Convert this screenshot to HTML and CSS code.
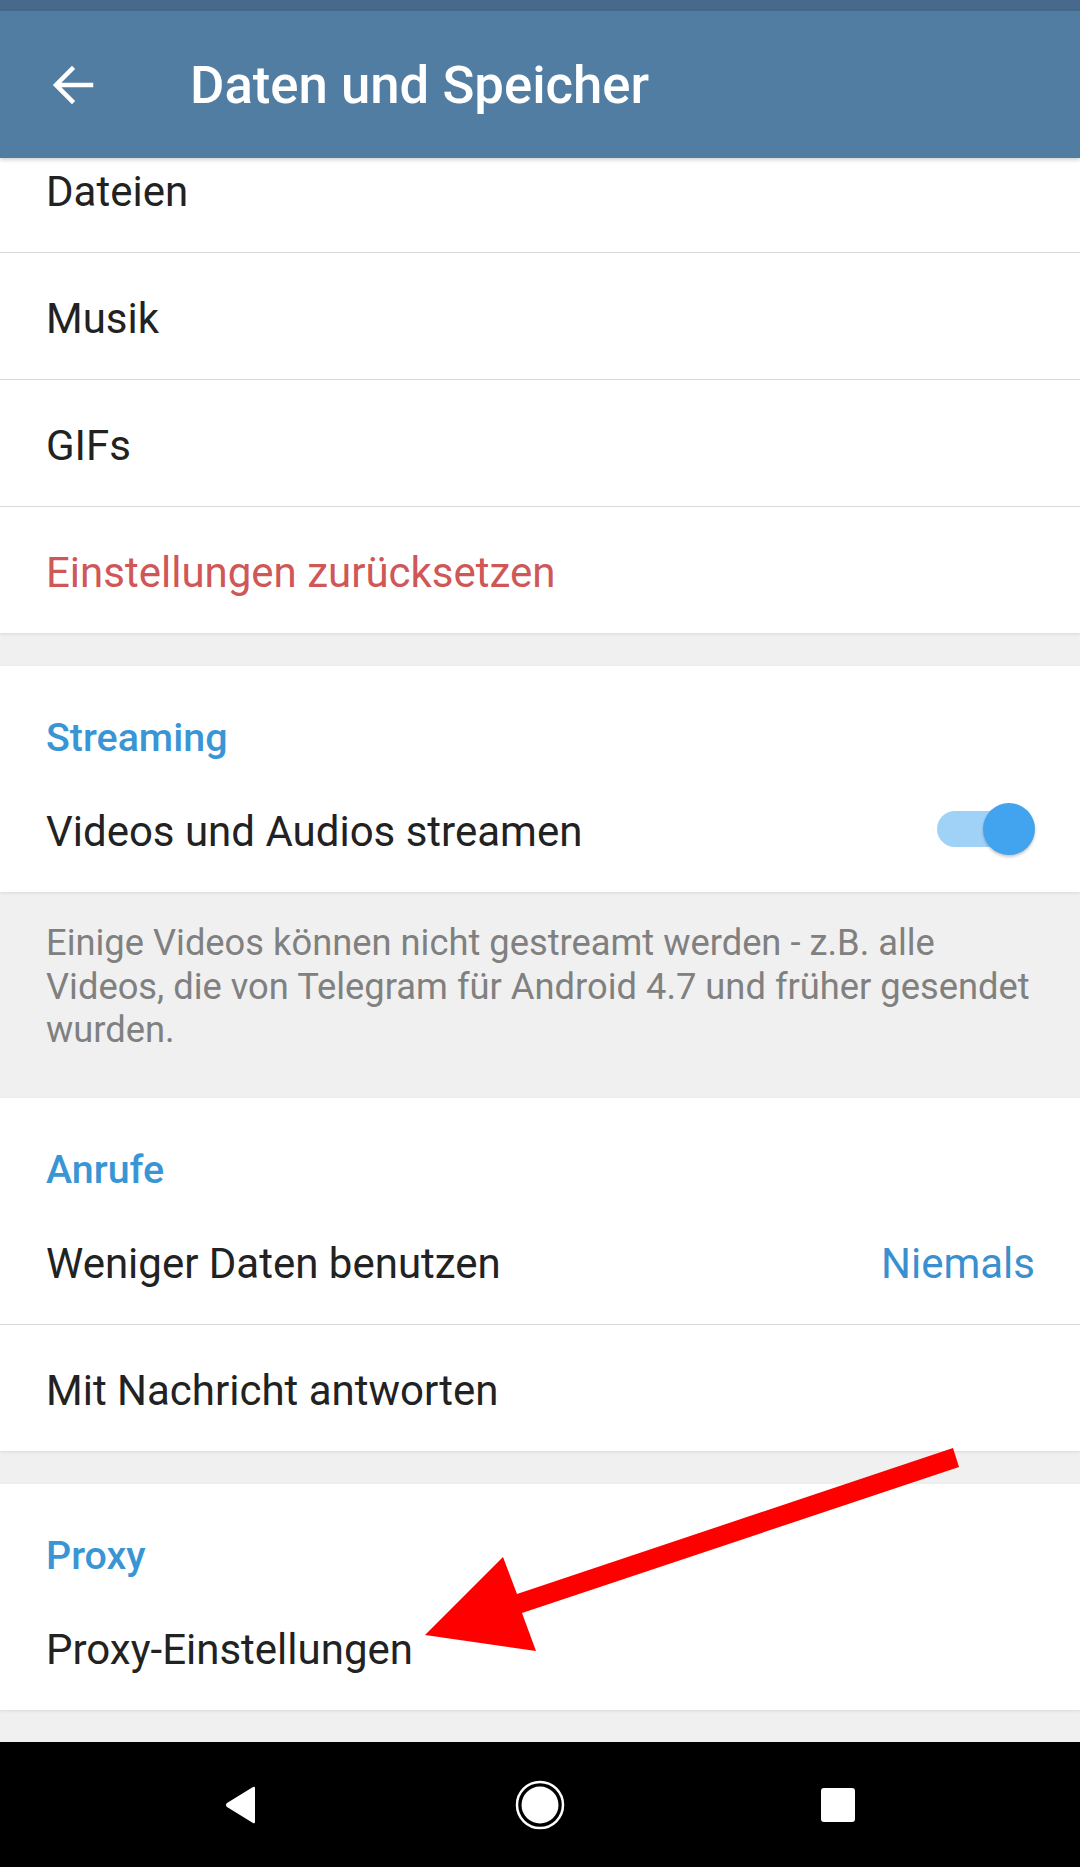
FILE: index.html
```html
<!DOCTYPE html>
<html lang="de">
<head>
    <meta charset="UTF-8">
    <meta name="viewport" content="width=device-width, initial-scale=1.0">
    <title>Daten und Speicher</title>
    <link rel="stylesheet" href="styles.css">
</head>
<body>
    <div class="statusbar"></div>

    <header class="toolbar">
        <button class="back-btn" type="button" aria-label="Zurück">
            <svg width="44" height="44" viewBox="0 0 44 44">
                <path d="M40 22 H6 M21 6 L5 22 L21 38" fill="none" stroke="#fff" stroke-width="4.5" stroke-linecap="square"/>
            </svg>
        </button>
        <h1 class="toolbar-title">Daten und Speicher</h1>
    </header>

    <main class="scroll">
        <section class="card card-first">
            <div class="row row-cut">Dateien</div>
            <div class="row">Musik</div>
            <div class="row">GIFs</div>
            <div class="row row-last red">Einstellungen zurücksetzen</div>
        </section>

        <div class="gap"></div>

        <section class="card">
            <div class="card-header">Streaming</div>
            <div class="row row-last">
                <span>Videos und Audios streamen</span>
                <span class="switch on">
                    <span class="switch-track"></span>
                    <span class="switch-thumb"></span>
                </span>
            </div>
        </section>

        <p class="info">Einige Videos können nicht gestreamt werden - z.B. alle Videos, die von Telegram für Android 4.7 und früher gesendet wurden.</p>

        <section class="card">
            <div class="card-header">Anrufe</div>
            <div class="row">
                <span>Weniger Daten benutzen</span>
                <span class="value">Niemals</span>
            </div>
            <div class="row row-last">Mit Nachricht antworten</div>
        </section>

        <div class="gap"></div>

        <section class="card">
            <div class="card-header">Proxy</div>
            <div class="row row-last">Proxy-Einstellungen</div>
        </section>

        <div class="filler"></div>
    </main>

    <nav class="navbar">
        <svg width="40" height="40" viewBox="0 0 40 40">
            <path d="M34 3 L34 37 Q34 39 32 38 L6 22 Q4 20 6 18 L32 2 Q34 1 34 3 Z" fill="#fff"/>
        </svg>
        <svg width="52" height="52" viewBox="0 0 52 52">
            <circle cx="26" cy="26" r="23" fill="none" stroke="#fff" stroke-width="2.5"/>
            <circle cx="26" cy="26" r="18.5" fill="#fff"/>
        </svg>
        <svg width="40" height="40" viewBox="0 0 40 40">
            <rect x="3" y="3" width="34" height="34" rx="3" fill="#fff"/>
        </svg>
    </nav>

    <!-- Markierung aus dem Screenshot -->
    <svg class="annotation" width="1080" height="1867" viewBox="0 0 1080 1867">
        <polygon points="953,1448 959,1467 522,1613 536,1651 425,1635 503,1557 517,1594" fill="#ff0000"/>
    </svg>
</body>
</html>
```

FILE: styles.css
```css
* {
    box-sizing: border-box;
}
html, body {
    margin: 0;
    padding: 0;
}
body {
    width: 1080px;
    height: 1867px;
    display: flex;
    flex-direction: column;
    font-family: Roboto, "Noto Sans", sans-serif;
    background-color: #f0f0f0;
    color: #222222;
    overflow: hidden;
    position: relative;
}
.statusbar {
    height: 11px;
    background-color: #46698c;
}
.toolbar {
    height: 147px;
    display: flex;
    align-items: center;
    background-color: #527da3;
    box-shadow: 0 2px 4px rgba(0, 0, 0, 0.18);
    position: relative;
    z-index: 2;
}
.back-btn {
    width: 44px;
    height: 44px;
    margin-left: 51px;
    padding: 0;
    border: none;
    background: transparent;
    display: flex;
}
.toolbar-title {
    margin: 0 0 0 95px;
    color: #ffffff;
    font-size: 52.7px;
    font-weight: 500;
    padding-top: 1px;
}
.scroll {
    flex: 1;
    display: flex;
    flex-direction: column;
    overflow: hidden;
}
.card {
    background-color: #ffffff;
    box-shadow: 0 1px 3px rgba(0, 0, 0, 0.10);
}
.card-first {
    margin-top: -32px;
}
.gap {
    height: 33px;
}
.row {
    height: 127px;
    padding: 0 45px 0 46px;
    display: flex;
    align-items: center;
    justify-content: space-between;
    font-size: 42px;
    padding-top: 4px;
    border-bottom: 1px solid #d9d9d9;
}
.row-last {
    height: 126px;
    border-bottom: none;
}
.red {
    color: #cf5757;
}
.value {
    color: #3a8fcf;
}
.card-header {
    height: 100px;
    padding: 48px 46px 0;
    font-size: 39.4px;
    font-weight: 500;
    color: #3a95d5;
}
.switch {
    width: 98px;
    height: 54px;
    position: relative;
    margin-right: 0;
    margin-top: -4px;
}
.switch-track {
    position: absolute;
    left: 0;
    top: 9px;
    width: 88px;
    height: 36px;
    border-radius: 18px;
    background-color: #a0d2f7;
}
.switch-thumb {
    position: absolute;
    right: 0;
    top: 1px;
    width: 52px;
    height: 52px;
    border-radius: 50%;
    background-color: #42a4ee;
    box-shadow: 0 2px 3px rgba(0, 0, 0, 0.22);
}
.info {
    margin: 0;
    height: 206px;
    padding: 29px 40px 0 46px;
    font-size: 36.3px;
    line-height: 43.5px;
    color: #808080;
}
.filler {
    flex: 1;
}
.navbar {
    height: 125px;
    background-color: #000000;
    display: flex;
    align-items: center;
    padding-left: 221px;
}
.navbar svg:nth-child(1) {
    margin-right: 253px;
}
.navbar svg:nth-child(2) {
    margin-right: 252px;
}
.annotation {
    position: absolute;
    left: 0;
    top: 0;
    pointer-events: none;
    z-index: 5;
}
```
